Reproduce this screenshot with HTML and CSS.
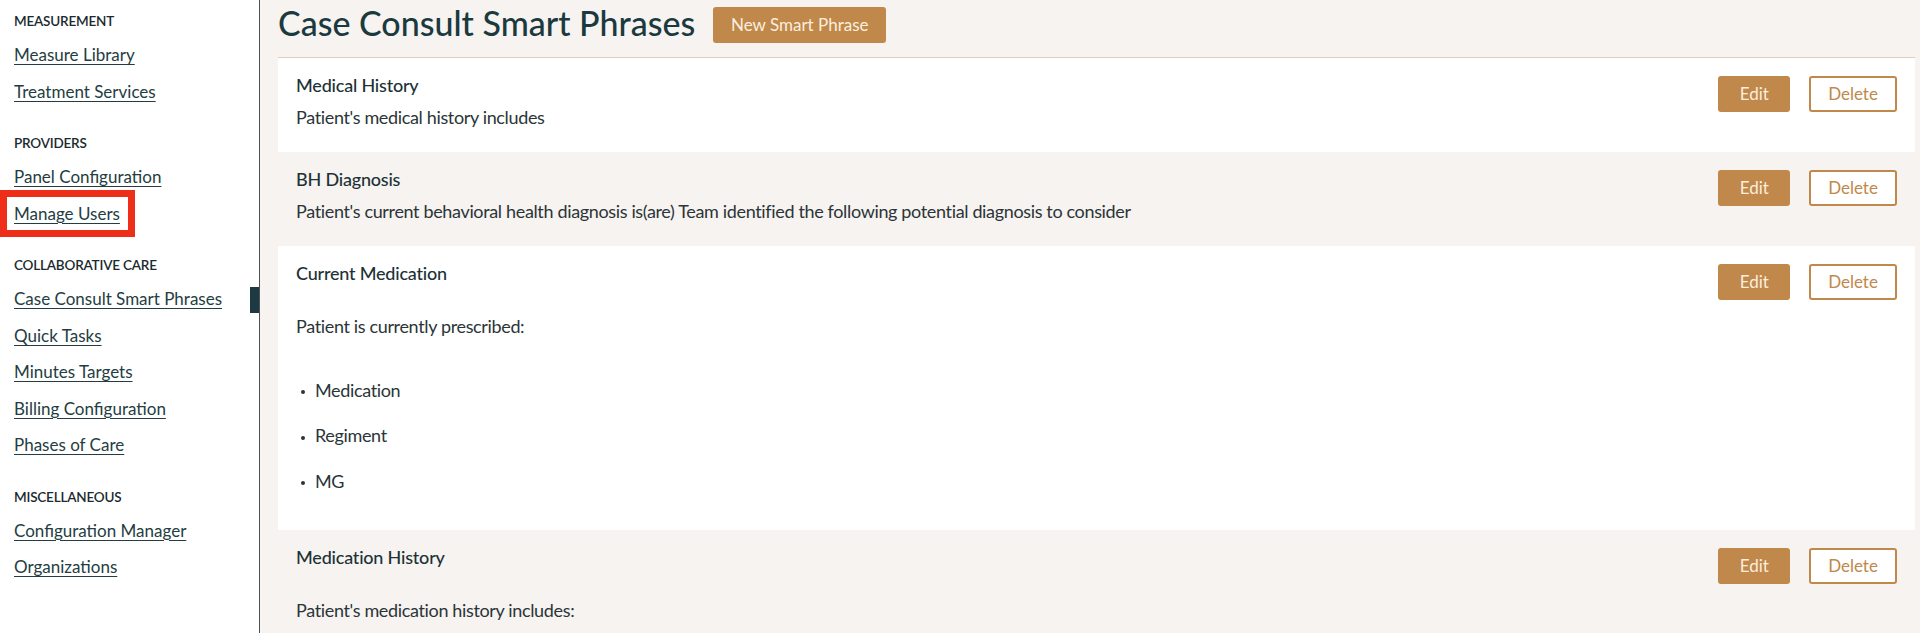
FILE: index.html
```html
<!DOCTYPE html>
<html lang="en">
<head>
<meta charset="utf-8">
<title>Case Consult Smart Phrases</title>
<link rel="stylesheet" href="styles.css">
</head>
<body>
<div class="app">
  <nav class="sidebar">
    <div class="nav-section">
      <div class="nav-heading">MEASUREMENT</div>
      <div class="nav-item"><a href="#">Measure Library</a></div>
      <div class="nav-item"><a href="#">Treatment Services</a></div>
    </div>
    <div class="nav-section">
      <div class="nav-heading">PROVIDERS</div>
      <div class="nav-item"><a href="#">Panel Configuration</a></div>
      <div class="nav-item highlighted"><a href="#">Manage Users</a></div>
    </div>
    <div class="nav-section">
      <div class="nav-heading">COLLABORATIVE CARE</div>
      <div class="nav-item active"><a href="#">Case Consult Smart Phrases</a></div>
      <div class="nav-item"><a href="#">Quick Tasks</a></div>
      <div class="nav-item"><a href="#">Minutes Targets</a></div>
      <div class="nav-item"><a href="#">Billing Configuration</a></div>
      <div class="nav-item"><a href="#">Phases of Care</a></div>
    </div>
    <div class="nav-section">
      <div class="nav-heading">MISCELLANEOUS</div>
      <div class="nav-item"><a href="#">Configuration Manager</a></div>
      <div class="nav-item"><a href="#">Organizations</a></div>
    </div>
  </nav>
  <main class="main">
    <header class="page-header">
      <h1 class="page-title">Case Consult Smart Phrases</h1>
      <button class="btn btn-primary btn-new">New Smart Phrase</button>
    </header>
    <div class="phrase-list">
      <div class="phrase-row">
        <div class="phrase-text">
          <div class="phrase-title">Medical History</div>
          <div class="phrase-desc">Patient's medical history includes</div>
        </div>
        <div class="phrase-actions">
          <button class="btn btn-primary btn-edit">Edit</button>
          <button class="btn btn-outline btn-delete">Delete</button>
        </div>
      </div>
      <div class="phrase-row">
        <div class="phrase-text">
          <div class="phrase-title">BH Diagnosis</div>
          <div class="phrase-desc">Patient's current behavioral health diagnosis is(are) Team identified the following potential diagnosis to consider</div>
        </div>
        <div class="phrase-actions">
          <button class="btn btn-primary btn-edit">Edit</button>
          <button class="btn btn-outline btn-delete">Delete</button>
        </div>
      </div>
      <div class="phrase-row">
        <div class="phrase-text">
          <div class="phrase-title">Current Medication</div>
          <div class="phrase-desc rich">
            <p>Patient is currently prescribed:</p>
            <ul>
              <li>Medication</li>
              <li>Regiment</li>
              <li>MG</li>
            </ul>
          </div>
        </div>
        <div class="phrase-actions">
          <button class="btn btn-primary btn-edit">Edit</button>
          <button class="btn btn-outline btn-delete">Delete</button>
        </div>
      </div>
      <div class="phrase-row">
        <div class="phrase-text">
          <div class="phrase-title">Medication History</div>
          <div class="phrase-desc rich">
            <p>Patient's medication history includes:</p>
          </div>
        </div>
        <div class="phrase-actions">
          <button class="btn btn-primary btn-edit">Edit</button>
          <button class="btn btn-outline btn-delete">Delete</button>
        </div>
      </div>
    </div>
  </main>
</div>
</body>
</html>
```

FILE: styles.css
```css
html, body {
  margin: 0;
  padding: 0;
  height: 100%;
}

body {
  font-family: Lato, "Open Sans", "Liberation Sans", sans-serif;
  color: #2b3538;
  background: #f7f3f0;
  overflow: hidden;
}

.app {
  display: flex;
  height: 633px;
  overflow: hidden;
}

/* Sidebar */
.sidebar {
  flex: 0 0 245px;
  width: 245px;
  background: #ffffff;
  border-right: 1px solid #4d5355;
  padding: 11px 0 0 14px;
}

.nav-section + .nav-section {
  margin-top: 23px;
}

.nav-heading {
  font-size: 13.5px;
  line-height: 20px;
  font-weight: 600;
  color: #1b2a2e;
  margin-bottom: 6px;
  letter-spacing: -0.2px;
}

.nav-item {
  position: relative;
  font-size: 17px;
  line-height: 36.5px;
  white-space: nowrap;
}

.nav-item a {
  color: #243d42;
  text-decoration: underline;
  text-underline-offset: 3px;
  text-decoration-thickness: 1px;
}

.nav-item.active::after {
  content: "";
  position: absolute;
  right: 0;
  top: 6px;
  width: 9px;
  height: 26px;
  background: #1d3a43;
}

.nav-item.highlighted::before {
  content: "";
  position: absolute;
  left: -14px;
  top: -6px;
  width: 135px;
  height: 47px;
  border: 7px solid #ef2e19;
  box-sizing: border-box;
  pointer-events: none;
}

/* Main */
.main {
  flex: 1 1 auto;
  min-width: 0;
  padding: 0 5px 0 18px;
  display: flex;
  flex-direction: column;
}

.page-header {
  display: flex;
  align-items: flex-start;
  gap: 18px;
  padding: 3px 0 14px 0;
  border-bottom: 1px solid #e4cdb8;
}

.page-title {
  margin: 0;
  font-size: 34px;
  line-height: 40px;
  font-weight: 500;
  color: #1b3a40;
}

.btn {
  font-family: inherit;
  font-size: 17px;
  line-height: 20px;
  height: 36px;
  border-radius: 3px;
  cursor: pointer;
  box-sizing: border-box;
  padding: 0;
}

.btn-primary {
  background: #c0884b;
  color: #fbeedf;
  border: none;
}

.btn-outline {
  background: #ffffff;
  color: #c0884b;
  border: 2px solid #c0884b;
}

.btn-new {
  margin-top: 4px;
  width: 173px;
}

/* Phrase rows */
.phrase-row {
  display: flex;
  align-items: flex-start;
  justify-content: space-between;
  padding: 15px 18px 21px 18px;
}

.phrase-row:nth-child(odd) {
  background: #ffffff;
}

.phrase-text {
  display: flex;
  flex-direction: column;
  gap: 7px;
  min-width: 0;
}

.phrase-title {
  font-size: 18px;
  line-height: 24px;
  font-weight: 500;
  color: #1d3237;
  letter-spacing: -0.2px;
}

.phrase-desc {
  font-size: 18px;
  line-height: 27px;
  color: #2b3538;
  letter-spacing: -0.35px;
}

.phrase-desc.rich p {
  margin: 21px 0 0 0;
}

.phrase-desc.rich ul {
  list-style: none;
  margin: 36.8px 0 14px 0;
  padding: 0;
}

.phrase-desc.rich li + li {
  margin-top: 18.5px;
}

.phrase-desc.rich li::before {
  content: "";
  display: inline-block;
  width: 4px;
  height: 4px;
  border-radius: 50%;
  background: currentColor;
  vertical-align: middle;
  margin: 0 10px 0 5px;
}

.phrase-actions {
  display: flex;
  gap: 18.7px;
  margin-top: 3px;
  flex: 0 0 auto;
}

.btn-edit {
  width: 72px;
}

.btn-delete {
  width: 88px;
}
```
